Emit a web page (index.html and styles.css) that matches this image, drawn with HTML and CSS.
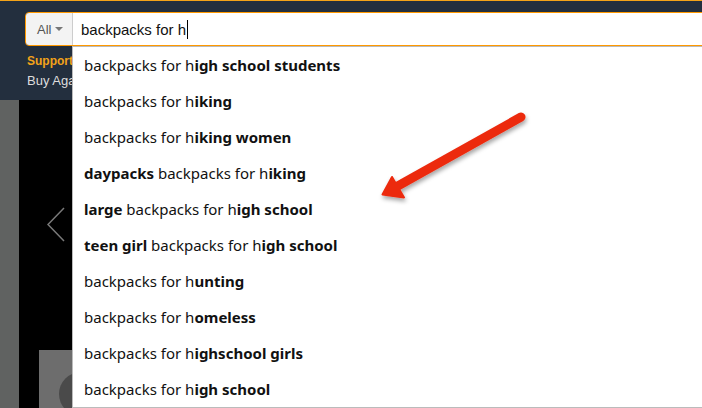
FILE: index.html
```html
<!DOCTYPE html>
<html lang="en">
<head>
    <meta charset="UTF-8">
    <meta name="viewport" content="width=device-width, initial-scale=1.0">
    <title>backpacks for h</title>
    <link rel="stylesheet" href="styles.css">
</head>
<body>
    <header class="nav">
        <div class="search">
            <div class="search-dept">All <span class="caret"></span></div>
            <div class="search-field">backpacks for h<span class="cursor"></span></div>
        </div>
        <div class="nav-links">
            <div class="nav-support">Support</div>
            <div class="nav-buy">Buy Again</div>
        </div>
    </header>

    <main class="hero">
        <div class="hero-edge"></div>
        <div class="hero-stage">
            <svg class="hero-prev" width="20" height="36" viewBox="0 0 20 36">
                <polyline points="17,1 1,17.5 17,34" fill="none" stroke="#7a7a7a" stroke-width="1.5"/>
            </svg>
            <div class="hero-card"><div class="hero-dot"></div></div>
        </div>
    </main>

    <ul class="suggest">
        <li>backpacks for h<b>igh school students</b></li>
        <li>backpacks for h<b>iking</b></li>
        <li>backpacks for h<b>iking women</b></li>
        <li><b>daypacks</b> backpacks for h<b>iking</b></li>
        <li><b>large</b> backpacks for h<b>igh school</b></li>
        <li><b>teen girl</b> backpacks for h<b>igh school</b></li>
        <li>backpacks for h<b>unting</b></li>
        <li>backpacks for h<b>omeless</b></li>
        <li>backpacks for h<b>ighschool girls</b></li>
        <li>backpacks for h<b>igh school</b></li>
    </ul>

    <!-- annotation arrow -->
    <svg class="callout" width="702" height="408" viewBox="0 0 702 408">
        <defs>
            <filter id="drop" x="-20%" y="-20%" width="140%" height="140%">
                <feDropShadow dx="1" dy="3" stdDeviation="2" flood-color="#000" flood-opacity="0.35"/>
            </filter>
        </defs>
        <g filter="url(#drop)">
            <line x1="521" y1="117" x2="396" y2="187" stroke="#ec2a0e" stroke-width="9" stroke-linecap="round"/>
            <polygon points="382.5,194.5 392,177 404,197.5" fill="#ec2a0e" stroke="#ec2a0e" stroke-width="2" stroke-linejoin="round"/>
        </g>
    </svg>
</body>
</html>
```

FILE: styles.css
```css
body {
    margin: 0;
    background-color: #000;
    font-family: "Liberation Sans", Arial, sans-serif;
    overflow: hidden;
}
.nav {
    height: 99px;
    background-color: #232f3e;
    border-top: 1px solid #f3a319;
    overflow: hidden;
}
.search {
    display: flex;
    height: 32px;
    margin: 11px -10px 0 25px;
    border: 1px solid #f90;
    border-radius: 4px;
    overflow: hidden;
}
.search-dept {
    display: flex;
    align-items: center;
    width: 35px;
    padding-left: 11px;
    background-color: #f3f3f3;
    border-right: 1px solid #cdcdcd;
    color: #555;
    font-size: 13px;
}
.caret {
    margin-left: 4px;
    border-left: 4px solid transparent;
    border-right: 4px solid transparent;
    border-top: 4px solid #777;
}
.search-field {
    flex: 1;
    display: flex;
    align-items: center;
    padding-left: 8px;
    background-color: #fff;
    color: #111;
    font-size: 15px;
}
.cursor {
    width: 1px;
    height: 19px;
    margin-left: 1px;
    background-color: #000;
}
.nav-links {
    margin-top: 5px;
    padding-left: 27px;
    line-height: 20px;
}
.nav-support {
    color: #f3a319;
    font-size: 12px;
    font-weight: bold;
}
.nav-buy {
    color: #ddd;
    font-size: 13px;
}
.hero {
    display: flex;
    height: 308px;
}
.hero-edge {
    width: 19px;
    background-color: #606261;
}
.hero-stage {
    flex: 1;
    position: relative;
    background-color: #000;
    overflow: hidden;
}
.hero-prev {
    position: absolute;
    left: 28px;
    top: 107px;
}
.hero-card {
    width: 60px;
    height: 60px;
    margin: 250px 0 0 20px;
    background-color: #6d6d6d;
    overflow: hidden;
}
.hero-dot {
    width: 44px;
    height: 44px;
    margin: 22px 0 0 20px;
    border-radius: 50%;
    background-color: #4a4a4a;
}
.suggest {
    position: absolute;
    top: 46px;
    left: 72px;
    right: -2px;
    margin: 0;
    padding: 0;
    list-style: none;
    background-color: #fff;
    border: 1px solid #bbb;
    font-family: "Noto Sans", "Open Sans", sans-serif;
    font-size: 15px;
    color: #111;
}
.suggest li {
    height: 36px;
    line-height: 36px;
    padding-left: 11px;
    white-space: nowrap;
}
.suggest b {
    font-weight: bold;
}
.callout {
    position: absolute;
    top: 0;
    left: 0;
    pointer-events: none;
}
```
